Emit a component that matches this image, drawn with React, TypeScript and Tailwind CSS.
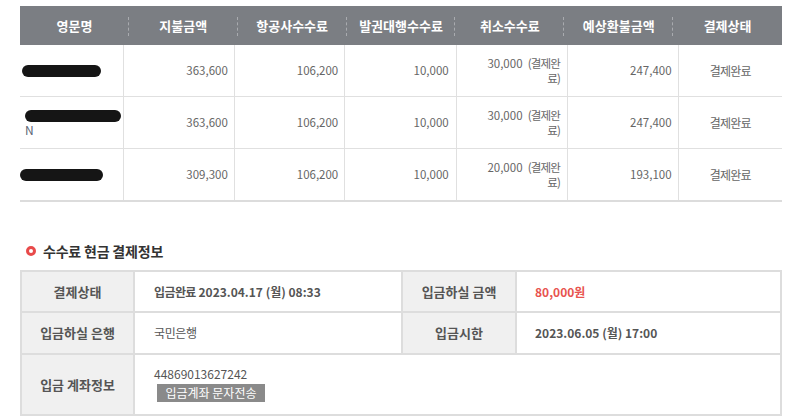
import React from "react";

const headers = ["영문명", "지불금액", "항공사수수료", "발권대행수수료", "취소수수료", "예상환불금액", "결제상태"];

const rows = [
  { mark: "w-[79px] ml-[2px]", n: false, pay: "363,600", air: "106,200", fee: "10,000", cancel: "30,000", refund: "247,400" },
  { mark: "w-[96px] ml-[5px]", n: true, pay: "363,600", air: "106,200", fee: "10,000", cancel: "30,000", refund: "247,400" },
  { mark: "w-[83px] ml-0", n: false, pay: "309,300", air: "106,200", fee: "10,000", cancel: "20,000", refund: "193,100" },
];

const font = { fontFamily: '"Noto Sans CJK KR", "Noto Sans", sans-serif' };

export default function App() {
  return (
    <div className="w-[804px] h-[418px] bg-white overflow-hidden" style={font}>
      <div className="pl-[20px] pt-[6px] w-[782px]">
        {/* Table 1 */}
        <div className="w-[762px]">
          <div className="flex h-[39px] bg-[#7b7e83] text-white text-[13px] font-bold">
            {headers.map((h, i) => (
              <div key={h} className="relative flex-1 flex items-center justify-center">
                <span>{h}</span>
                {i < headers.length - 1 && (
                  <span className="absolute right-0 top-[11px] h-[19px] border-r border-dashed border-[#a9abaf]" />
                )}
              </div>
            ))}
          </div>
          {rows.map((r, idx) => (
            <div
              key={idx}
              className={`flex text-[11.5px] text-[#666] leading-[15px] ${
                idx === rows.length - 1 ? "border-b-2 border-[#dcdcdc] h-[53px]" : "h-[52px] border-b border-[#e0e0e0]"
              }`}
            >
              <div className="flex-1 flex flex-col justify-center border-r border-[#e0e0e0]">
                <div className={`h-[12px] rounded-full bg-[#151515] ${r.mark}`} />
                {r.n && <div className="ml-[5px] mt-[1px] text-[12px] leading-[13px] text-[#5d6675]">N</div>}
              </div>
              <div className="flex-1 flex items-center justify-end pr-[6px] border-r border-[#e0e0e0]">{r.pay}</div>
              <div className="flex-1 flex items-center justify-end pr-[6px] border-r border-[#e0e0e0]">{r.air}</div>
              <div className="flex-1 flex items-center justify-end pr-[7px] border-r border-[#e0e0e0]">{r.fee}</div>
              <div className="flex-1 flex items-center justify-end pr-[7px] border-r border-[#e0e0e0]">
                <div className="text-right">
                  <div>
                    {r.cancel}&nbsp;&nbsp;<span className="tracking-[-0.8px]">(결제완</span>
                  </div>
                  <div className="tracking-[-0.8px]">료)</div>
                </div>
              </div>
              <div className="flex-1 flex items-center justify-end pr-[6px] border-r border-[#e0e0e0]">{r.refund}</div>
              <div className="flex-1 flex items-center justify-center">
                <span className="tracking-[-0.8px] text-[12px]">결제완료</span>
              </div>
            </div>
          ))}
        </div>

        {/* Section title */}
        <div className="flex items-center mt-[40px] h-[18px] pl-[6px]">
          <span className="w-[10px] h-[10px] rounded-full border-[3px] border-[#e84a4a]" />
          <span className="ml-[7px] text-[14px] font-bold text-[#333] tracking-[-0.2px]">수수료 현금 결제정보</span>
        </div>

        {/* Table 2 */}
        <div className="mt-[10px] w-[762px] border-2 border-[#dddddd] text-[12px] text-[#555]">
          <div className="flex h-[41px] border-b-2 border-[#dddddd]">
            <div className="w-[113px] bg-[#f0f0f0] border-r-2 border-[#dddddd] flex items-center justify-center font-bold text-[13px]">
              결제상태
            </div>
            <div className="w-[266px] flex items-center pl-[19px] font-bold">
              <span className="tracking-[-0.6px]">입금완료</span>&nbsp;2023.04.17 (월) 08:33
            </div>
            <div className="w-[116px] bg-[#f0f0f0] border-x-2 border-[#dddddd] flex items-center justify-center font-bold text-[13px]">
              입금하실 금액
            </div>
            <div className="flex-1 flex items-center pl-[18px] font-bold text-[#e8534f]">80,000원</div>
          </div>
          <div className="flex h-[42px] border-b-2 border-[#dddddd]">
            <div className="w-[113px] bg-[#f0f0f0] border-r-2 border-[#dddddd] flex items-center justify-center font-bold text-[13px]">
              입금하실 은행
            </div>
            <div className="w-[266px] flex items-center pl-[19px] tracking-[-0.4px]">국민은행</div>
            <div className="w-[116px] bg-[#f0f0f0] border-x-2 border-[#dddddd] flex items-center justify-center font-bold text-[13px]">
              입금시한
            </div>
            <div className="flex-1 flex items-center pl-[18px] font-bold">2023.06.05 (월) 17:00</div>
          </div>
          <div className="flex h-[59px]">
            <div className="w-[113px] bg-[#f0f0f0] border-r-2 border-[#dddddd] flex items-center justify-center font-bold text-[13px]">
              입금 계좌정보
            </div>
            <div className="flex-1 flex flex-col justify-center pl-[19px]">
              <div className="leading-[14px]">44869013627242</div>
              <div className="mt-[3px] ml-[3px] w-[108px] h-[18px] bg-[#8a8a8a] text-white text-[12px] leading-[18px] text-center">
                입금계좌 문자전송
              </div>
            </div>
          </div>
        </div>
      </div>
    </div>
  );
}
